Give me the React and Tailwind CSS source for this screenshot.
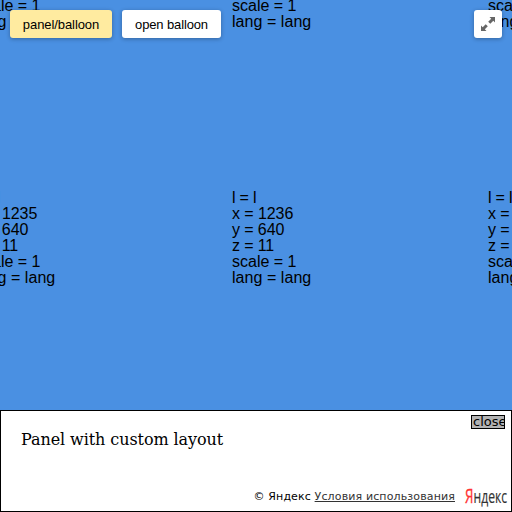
const columns = [1235, 1236, 1237];
const rows = [639, 640];

function Tile({ x, y }) {
  return (
    <div className="h-64 w-64 whitespace-nowrap text-[16px] leading-4">
      <div className="tracking-[-0.2px]">l = l</div>
      <div className="tracking-[-0.08px]">x = {x}</div>
      <div className="tracking-[-0.1px]">y = {y}</div>
      <div className="tracking-[-0.15px]">z = 11</div>
      <div>scale = 1</div>
      <div className="tracking-[0.05px]">lang = lang</div>
    </div>
  );
}

function Button({ active, children }) {
  return (
    <button
      className={
        "h-7 whitespace-nowrap rounded-[3px] pt-px text-center text-[13px] leading-[27px] text-black shadow-[0_1px_4px_rgba(0,0,0,0.3)] " +
        (active ? "w-[102px] bg-[#ffeba0] tracking-[-0.08px]" : "w-[99px] bg-white tracking-[-0.13px]")
      }
    >
      {children}
    </button>
  );
}

function FullscreenIcon() {
  return (
    <svg width="28" height="28" viewBox="0 0 28 28" fill="#666">
      <path d="M15.5 7H21V12.5L19.3 10.8L16.3 13.8L14.2 11.7L17.2 8.7Z" />
      <path d="M12.5 21H7V15.5L8.7 17.2L11.7 14.2L13.8 16.3L10.8 19.3Z" />
    </svg>
  );
}

function Logo() {
  return (
    <svg width="44" height="22" viewBox="0 0 44 22" className="font-['Open_Sans',sans-serif]">
      <text x="1" y="18" fontSize="20" fill="#f33" stroke="#f33" strokeWidth="0.3" textLength="8.5" lengthAdjust="spacingAndGlyphs">Я</text>
      <text x="9.5" y="18" fontSize="18.5" fill="#333" stroke="#333" strokeWidth="0.2" textLength="33.5" lengthAdjust="spacingAndGlyphs">ндекс</text>
    </svg>
  );
}

export default function App() {
  return (
    <div className="relative flex h-[512px] w-[512px] flex-col overflow-hidden bg-[#4a90e2] font-['Liberation_Sans',Arial,sans-serif] text-black">
      <div className="h-[410px] overflow-hidden">
        <div className="-mt-[66px] -ml-6 grid w-[768px] grid-cols-3">
          {rows.map((y) => columns.map((x) => <Tile key={x + "-" + y} x={x} y={y} />))}
        </div>
      </div>
      <div className="absolute inset-x-[10px] top-[10px] flex gap-[10px]">
        <Button active>panel/balloon</Button>
        <Button>open balloon</Button>
        <button className="ml-auto size-7 rounded-[3px] bg-white shadow-[0_1px_4px_rgba(0,0,0,0.3)]">
          <FullscreenIcon />
        </button>
      </div>
      <div className="flex h-[102px] flex-col justify-between border border-black bg-white">
        <div className="flex items-start justify-between pr-[6px] pt-1">
          <p className="pl-5 pt-[15px] font-['DejaVu_Serif',serif] text-[16px] leading-[19px] tracking-[-0.08px]">Panel with custom layout</p>
          <button className="h-[14px] w-[34px] overflow-hidden border border-black bg-[#b3b3b3] pl-px text-left font-['DejaVu_Sans',sans-serif] text-[13px] leading-3">
            close
          </button>
        </div>
        <div className="flex h-[26px] items-start justify-end pr-[3px] font-['DejaVu_Sans',sans-serif] text-[11px] leading-[18px]">
          <span className="mr-[9px] mt-[3px] whitespace-nowrap tracking-[0.13px]">
            © Яндекс <a className="text-[#333] underline">Условия использования</a>
          </span>
          <Logo />
        </div>
      </div>
    </div>
  );
}
